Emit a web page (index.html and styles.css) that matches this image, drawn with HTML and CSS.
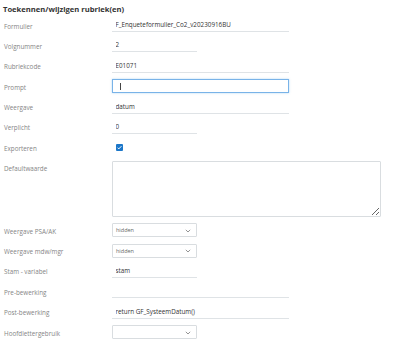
FILE: index.html
```html
<!DOCTYPE html>
<html lang="nl">
<head>
  <meta charset="UTF-8" />
  <meta name="viewport" content="width=device-width, initial-scale=1" />
  <title>Toekennen/wijzigen rubriek(en)</title>
  <link rel="stylesheet" href="styles.css">
</head>
<body>
  <div class="panel">
    <h2 class="panel-title">Toekennen/wijzigen rubriek(en)</h2>

    <form class="rubriek-form">
      <label class="lbl" for="f-formulier">Formulier</label>
      <input class="fld fld-long" type="text" id="f-formulier" value="F_Enqueteformulier_Co2_v20230916BU" />

      <label class="lbl" for="f-volgnummer">Volgnummer</label>
      <input class="fld fld-short" type="text" id="f-volgnummer" value="2" />

      <label class="lbl" for="f-rubriekcode">Rubriekcode</label>
      <input class="fld fld-long" type="text" id="f-rubriekcode" value="E01071" />

      <label class="lbl" for="f-prompt">Prompt</label>
      <div class="fld fld-long fld-focus"><span class="caret"></span></div>

      <label class="lbl" for="f-weergave">Weergave</label>
      <input class="fld fld-long" type="text" id="f-weergave" value="datum" />

      <label class="lbl" for="f-verplicht">Verplicht</label>
      <input class="fld fld-short" type="text" id="f-verplicht" value="0" />

      <label class="lbl">Exporteren</label>
      <div class="check-cell">
        <span class="check">
          <svg width="7" height="7" viewBox="0 0 7 7"><path d="M1.6 3.7 L2.8 4.9 L5.4 2.2" fill="none" stroke="#fff" stroke-width="1"/></svg>
        </span>
      </div>

      <label class="lbl" for="f-default">Defaultwaarde</label>
      <textarea class="fld-area" id="f-default"></textarea>

      <label class="lbl">Weergave PSA/AK</label>
      <div class="sel">
        <span class="sel-text">hidden</span>
        <svg class="chev" width="6" height="4" viewBox="0 0 6 4"><path d="M0.8 0.8 L3 3 L5.2 0.8" fill="none" stroke="#888" stroke-width="0.9"/></svg>
      </div>

      <label class="lbl">Weergave mdw/mgr</label>
      <div class="sel">
        <span class="sel-text">hidden</span>
        <svg class="chev" width="6" height="4" viewBox="0 0 6 4"><path d="M0.8 0.8 L3 3 L5.2 0.8" fill="none" stroke="#888" stroke-width="0.9"/></svg>
      </div>

      <label class="lbl" for="f-stam">Stam - variabel</label>
      <input class="fld fld-short" type="text" id="f-stam" value="stam" />

      <label class="lbl" for="f-pre">Pre-bewerking</label>
      <input class="fld fld-long" type="text" id="f-pre" value="" />

      <label class="lbl" for="f-post">Post-bewerking</label>
      <input class="fld fld-long" type="text" id="f-post" value="return GF_SysteemDatum()" />

      <label class="lbl">Hoofdlettergebruik</label>
      <div class="sel">
        <span class="sel-text"></span>
        <svg class="chev" width="6" height="4" viewBox="0 0 6 4"><path d="M0.8 0.8 L3 3 L5.2 0.8" fill="none" stroke="#888" stroke-width="0.9"/></svg>
      </div>
    </form>
  </div>
</body>
</html>
```

FILE: styles.css
```css
body {
  margin: 0;
  background: #fff;
  font-family: 'Open Sans', 'Liberation Sans', sans-serif;
  color: #333;
}

.panel {
  padding: 4px 0 0 4px;
}

.panel-title {
  margin: 0 0 0 -1px;
  font-size: 7.6px;
  font-weight: 700;
  line-height: 10px;
  color: #333;
  height: 14px;
}

.rubriek-form {
  display: grid;
  grid-template-columns: 108px 1fr;
  row-gap: 6.4px;
  align-items: start;
}

.lbl {
  padding-top: 2.5px;
  font-size: 6.3px;
  line-height: 11.5px;
  color: #858585;
}

.fld {
  box-sizing: border-box;
  height: 14px;
  margin: 0;
  padding: 0 0 0 3.5px;
  border: none;
  border-bottom: 1px solid #dfe3e6;
  background: #fff;
  font-family: inherit;
  font-size: 6.3px;
  color: #333;
  outline: none;
}

.fld-long {
  width: 177px;
}

.fld-short {
  width: 85px;
}

.fld-focus {
  border: 1px solid #79b3e8;
  box-shadow: 0 0 2px rgba(102, 175, 233, 0.5);
  display: flex;
  align-items: center;
}

.caret {
  display: block;
  width: 1px;
  height: 7px;
  margin-left: 3px;
  background: #444;
}

.check-cell {
  height: 14px;
  display: flex;
  align-items: center;
  padding-left: 4px;
}

.check {
  display: block;
  width: 7px;
  height: 7px;
  background: #1c77c9;
  border-radius: 1px;
}

.check svg {
  display: block;
}

.fld-area {
  box-sizing: border-box;
  width: 269px;
  height: 56px;
  margin: 0;
  border: 1px solid #d9dde0;
  border-radius: 1px;
  font-family: inherit;
  font-size: 6.3px;
  resize: vertical;
}

.sel {
  position: relative;
  box-sizing: border-box;
  width: 85px;
  height: 14px;
  border: 1px solid #d9dde0;
  border-radius: 1px;
  display: flex;
  align-items: center;
  padding-left: 3px;
}

.sel-text {
  font-size: 5.5px;
  color: #666;
}

.chev {
  position: absolute;
  right: 5px;
  top: 4.5px;
}
```
